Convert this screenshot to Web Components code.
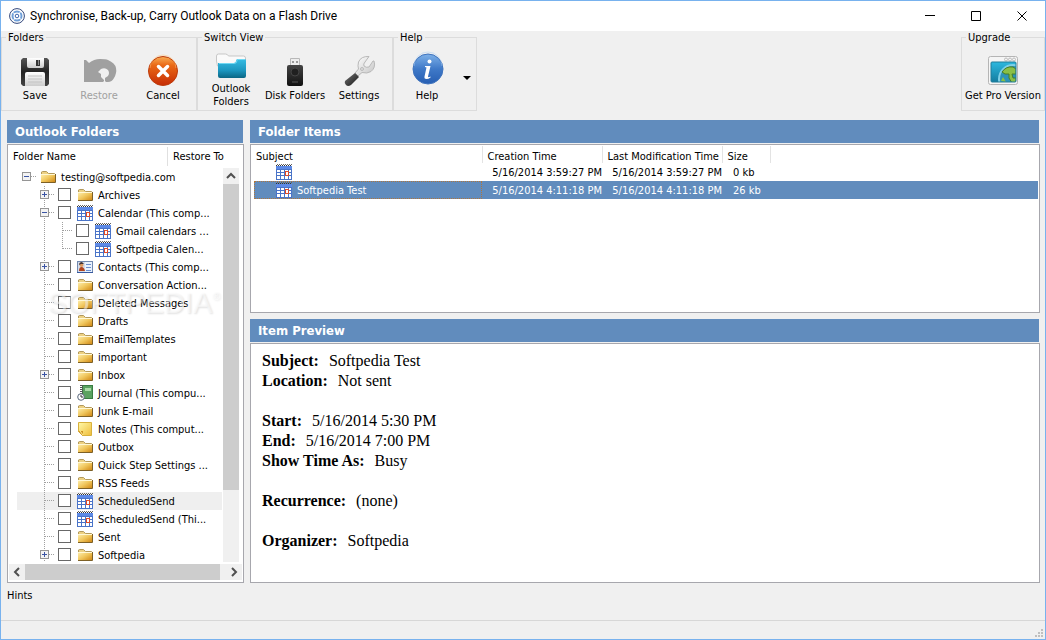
<!DOCTYPE html>
<html lang="en">
<head>
<meta charset="utf-8">
<title>Synchronise, Back-up, Carry Outlook Data on a Flash Drive</title>
<style>
  html, body { margin: 0; height: 100%; }
  body {
    --blue: #618cbd;
    --edge: #a7a7ad;
    --face: #f0f0f0;
    font: 11px/13px "DejaVu Sans Condensed", "Noto Sans", sans-serif;
    color: #000;
  }
</style>
</head>
<body>
<app-window>
  <title-bar slot="title">Synchronise, Back-up, Carry Outlook Data on a Flash Drive</title-bar>

  <tool-group slot="tools" label="Folders">
    <tool-button icon="save">Save</tool-button>
    <tool-button icon="restore" disabled>Restore</tool-button>
    <tool-button icon="cancel">Cancel</tool-button>
  </tool-group>
  <tool-group slot="tools" label="Switch View">
    <tool-button icon="outlook">Outlook<br>Folders</tool-button>
    <tool-button icon="usb">Disk Folders</tool-button>
    <tool-button icon="wrench">Settings</tool-button>
  </tool-group>
  <tool-group slot="tools" label="Help">
    <tool-button icon="info">Help</tool-button>
    <drop-arrow label="More help"></drop-arrow>
  </tool-group>
  <tool-group slot="tools" label="Upgrade" class="end">
    <tool-button icon="globe" wide>Get Pro Version</tool-button>
  </tool-group>

  <title-pane slot="side" heading="Outlook Folders"><folder-tree></folder-tree></title-pane>
  <title-pane slot="main" heading="Folder Items"><item-table></item-table></title-pane>
  <title-pane slot="main" heading="Item Preview"><item-preview></item-preview></title-pane>

  <span slot="hints">Hints</span>
</app-window>

<script>
const ICONS = {
  app: [16, `
    <circle cx="8" cy="8" r="7.400" fill="#fff" stroke="#32477c"/>
    <circle cx="8" cy="8" r="4.500" fill="#fff" stroke="#6f9fd8" stroke-width="2"/>
    <circle cx="8" cy="8" r="1.800" fill="#fff" stroke="#3d66ac"/>
    <path d="M3 4l3 2M13 12l-3-2M12 3l-2 3M4 13l2-3" stroke="#fff"/>`],
  save: [32, `
    <defs><linearGradient id="a" x2="0" y2="1"><stop stop-color="#555"/><stop offset=".5" stop-color="#222"/><stop offset="1" stop-color="#444"/></linearGradient>
    <linearGradient id="b" x2="0" y2="1"><stop stop-color="#fff"/><stop offset="1" stop-color="#ccc"/></linearGradient></defs>
    <path d="M4 2h24l2 2v24l-2 2H4l-2-2V4z" fill="url(#a)"/>
    <path d="M8 2h17v8q0 2-2 2H10q-2 0-2-2z" fill="url(#b)"/>
    <rect x="17" y="4" width="4" height="6" fill="#333"/><rect x="19" y="4" width="1" height="5" fill="#888"/>
    <path d="M6 30V18q0-2 2-2h16q2 0 2 2v12z" fill="url(#b)"/>
    <path d="M9 20h14M9 23h14M9 26h14" stroke="#c4c4c4"/>`],
  restore: [32, `
    <path d="M1 4h2l3 3q5-4 11-4 6 0 8 1 7 3 8 8 1 5-2 10-2 4-6 4h-2l-1-1v-3l3-2q2-3 0-6-3-3-7-1l-3 3 3 2v3l3 3v1l-1 1H1z" fill="#a0a0a0"/>`],
  cancel: [32, `
    <defs><linearGradient id="a" x2="0" y2="1"><stop stop-color="#f9ae55"/><stop offset=".3" stop-color="#ea6a17"/><stop offset="1" stop-color="#c62c05"/></linearGradient></defs>
    <circle cx="16" cy="15" r="14.500" fill="url(#a)" stroke="#bd3b0b"/>
    <path d="M3 12a13 13 0 0 1 26 0" fill="none" stroke="#ffc580" stroke-opacity=".5"/>
    <path d="M11.500 10.500l9 9M20.500 10.500l-9 9" stroke="#fff" stroke-width="3.500" stroke-linecap="round"/>`],
  outlook: [32, `
    <defs><linearGradient id="a" x2="0" y2="1"><stop stop-color="#37bde4"/><stop offset=".6" stop-color="#1c96bf"/><stop offset="1" stop-color="#0b6684"/></linearGradient></defs>
    <path d="M1.500 12V7q0-2 2-2h7q2 0 3 2h15q2 0 2 2v8h-28z" fill="#fafafa" stroke="#c7c7c7"/>
    <path d="M3 14h16q2 0 2-2 0-2 2-2h7q1 0 1 2v15q0 2-2 2H5q-2 0-2-2z" fill="url(#a)"/>
    <path d="M4 14.500h15q3 0 3-3 0-1 1-1h7" fill="none" stroke="#70d8f3"/>`],
  usb: [32, `
    <defs><linearGradient id="a" x2="0" y2="1"><stop stop-color="#444"/><stop offset="1" stop-color="#111"/></linearGradient></defs>
    <path d="M11.500 11V2.500h9V11z" fill="#ededed" stroke="#b8b8b8"/>
    <rect x="13" y="5" width="2" height="2" fill="#999"/><rect x="17" y="5" width="2" height="2" fill="#999"/>
    <rect x="8" y="9" width="16" height="21" rx="2" fill="url(#a)"/>
    <ellipse cx="16" cy="16" rx="4" ry="4" fill="#202020" stroke="#444"/>
    <path d="M13 26h6" fill="none" stroke="#555"/>`],
  wrench: [32, `
    <defs><linearGradient id="a" x2="1" y2="1"><stop stop-color="#fff"/><stop offset="1" stop-color="#c4c4c4"/></linearGradient>
    <linearGradient id="b" x2="1" y2="1"><stop stop-color="#777"/><stop offset=".5" stop-color="#444"/><stop offset="1" stop-color="#111"/></linearGradient></defs>
    <path d="M26 .5Q18 0 15.500 6q-1 4 0 7l-3.500 4 3 3 4-3.500q5 1.500 9-1 5-4 3-10.500h-1l-4 6q-3 1-5-1-1-2 1-4z" fill="url(#a)" stroke="#b8b8b8"/>
    <circle cx="19" cy="13" r="1.500" fill="#ddd" stroke="#bbb"/>
    <path d="M12 17l4 4-8 8q-3 2-5 0t-1-4z" fill="url(#b)"/>`],
  info: [32, `
    <defs><linearGradient id="a" x2="0" y2="1"><stop stop-color="#7eb1e8"/><stop offset=".5" stop-color="#3f79c8"/><stop offset="1" stop-color="#265eb2"/></linearGradient></defs>
    <g transform="translate(1 -3)"><circle cx="16" cy="16" r="15" fill="url(#a)" stroke="#3f73bd"/>
    <path d="M2 13a14 14 0 0 1 28 0" fill="none" stroke="#a9cdf3" stroke-opacity=".5"/>
    <circle cx="17.500" cy="8.500" r="2" fill="#fff"/>
    <path d="M13 13h5.500L16 23.500q0 1.500 2.500 0v1q-2 1.500-4 1.500-2.500 0-2-2.500l2-9q-.500-.500-1.500-.500z" fill="#fff"/></g>`],
  globe: [32, `
    <defs><linearGradient id="a" x2="0" y2="1"><stop stop-color="#2cb8df"/><stop offset="1" stop-color="#147c9f"/></linearGradient>
    <clipPath id="c"><rect x="4" y="6" width="25" height="20" rx="1"/></clipPath></defs>
    <rect x="1.500" y=".5" width="29" height="28" rx="2" fill="#f5f5f5" stroke="#b5b5b5"/>
    <g fill="none" stroke="#bbb"><circle cx="19" cy="3.500" r="1.500"/><circle cx="23" cy="3.500" r="1.500"/><circle cx="27" cy="3.500" r="1.500"/></g>
    <rect x="4" y="6" width="25" height="20" rx="1" fill="url(#a)"/>
    <g clip-path="url(#c)"><circle cx="26" cy="23" r="14" fill="#2d93b8" stroke="#7fcfe6" stroke-width="2"/>
    <path d="M15 16q4-6 11-5l3 2v5l-4 0 1 4 3 0v5h-4l-3-5 0-4-4 0z" fill="#8abf45" stroke="#477d2a"/>
    <path d="M14 25l2-4 3 5z" fill="#8abf45"/></g>
    <rect x="4" y="6" width="25" height="20" rx="1" fill="none" stroke="#217c99"/>`],
  folder: [16, `
    <defs><linearGradient id="a" x2="1" y2="1"><stop stop-color="#fff0b0"/><stop offset=".5" stop-color="#f0c65c"/><stop offset="1" stop-color="#cf8512"/></linearGradient></defs>
    <path d="M1.500 13V3l1-.5h4l2 2h6v9z" fill="#edd183" stroke="#b39a5c"/>
    <path d="M1 5h14v8.500H1z" fill="url(#a)"/>
    <path d="M15.500 5v8.500H1" fill="none" stroke="#7d6026"/>
    <path d="M1 5.500h14" stroke="#fff8d5"/>`],
  calendar: [16, `
    <rect y="2" width="16" height="14" fill="#4a74c8"/>
    <rect y="2" width="16" height="3" fill="#5d8ae6"/>
    <path d="M0 1.500h16" stroke="#333" stroke-dasharray="1 1"/><path d="M1 .5h15" stroke="#666" stroke-dasharray="1 1"/>
    <path d="M1 6h3v2H1zM5 6h3v2H5zM9 6h3v2H9zM13 6h2v2h-2zM1 9h3v2H1zM5 9h3v2H5zM9 9h3v2H9zM13 9h2v2h-2zM1 12h3v3H1zM5 12h3v3H5zM9 12h3v3H9zM13 12h2v3h-2z" fill="#fff"/>
    <rect x="9.500" y="7.500" width="3" height="4" fill="#fff" stroke="#e04c28"/>`],
  contact: [16, `
    <rect x=".5" y="2.500" width="15" height="11" fill="#e9f2fe" stroke="#7189b0"/>
    <path d="M0 13.500h16" stroke="#3659a0"/>
    <rect x="1" y="3" width="7" height="10" fill="#d5dce9"/>
    <path d="M2 12q0-4 2.500-4T8 12z" fill="#b2431c"/><circle cx="4.500" cy="6" r="2" fill="#dc9a61"/><path d="M2 6q0-3 3-3l2 2-3 0z" fill="#433"/>
    <path d="M9 5.500h5M9 8.500h5M9 11.500h5" stroke="#6d8fcd"/>`],
  journal: [16, `
    <rect x="5.500" y=".5" width="10" height="13" fill="#5aa260" stroke="#397d42"/>
    <rect x="8" y="3" width="6" height="3" fill="#a9dba6"/>
    <path d="M4.500 0v13" stroke="#555" stroke-width="3" stroke-dasharray="1 1"/>
    <circle cx="4" cy="12" r="3.300" fill="#fff" stroke="#59677b"/><path d="M4 10v2h2" fill="none" stroke="#333"/>`],
  note: [16, `
    <defs><linearGradient id="a" x2="1" y2="1"><stop stop-color="#fff9a8"/><stop offset="1" stop-color="#efbd3b"/></linearGradient></defs>
    <path d="M1.500 1.500h13v13h-9l-4-4z" fill="url(#a)" stroke="#d8b13c"/>
    <path d="M1 10l5 0 0 5z" fill="#cf9424"/><path d="M3 10l3 4" stroke="#fff2a0"/>`],
};

/** Inline SVG from the table above; `name` picks the drawing. */
class UiIcon extends HTMLElement {
  constructor() {
    super();
    this.attachShadow({ mode: 'open' });
  }

  connectedCallback() {
    const [size, art] = ICONS[this.getAttribute('name')];
    this.shadowRoot.innerHTML = `
      <style>:host { display: block; flex: none; } svg { display: block; overflow: visible; }</style>
      <svg width="${size}" height="${size}" viewBox="0 0 ${size} ${size}" aria-hidden="true">${art}</svg>`;
  }
}
customElements.define('ui-icon', UiIcon);

class AppWindow extends HTMLElement {
  constructor() {
    super();
    this.attachShadow({ mode: 'open' }).innerHTML = `
      <style>
        :host { display: flex; flex-direction: column; height: 100vh; box-sizing: border-box; border: 1px solid #78b2ee; background: var(--face); }
        .tools { display: flex; }
        ::slotted(.end) { margin-left: auto; }
        main { flex: 1; min-height: 0; display: grid; grid-template: minmax(0, 1fr) / 237px minmax(0, 1fr); gap: 6px; padding: 9px 5px 0 6px; }
        .side { display: grid; grid-template-rows: minmax(0, 1fr); }
        .main { display: grid; grid-template-rows: 193px minmax(0, 1fr); gap: 6px; }
        .hints { height: 31px; padding: 6px 6px 0; }
        footer { display: flex; justify-content: flex-end; align-items: flex-end; height: 18px; border-top: 1px solid #d7d7d7; }
        svg { display: block; margin: 2px; }
      </style>
      <slot name="title"></slot>
      <div class="tools"><slot name="tools"></slot></div>
      <main>
        <div class="side"><slot name="side"></slot></div>
        <div class="main"><slot name="main"></slot></div>
      </main>
      <div class="hints"><slot name="hints"></slot></div>
      <footer><svg width="8" height="8" fill="#bfbfbf"><path d="M6 0h2v2H6zM3 3h2v2H3zM6 3h2v2H6zM0 6h2v2H0zM3 6h2v2H3zM6 6h2v2H6z"/></svg></footer>`;
  }
}
customElements.define('app-window', AppWindow);

class TitleBar extends HTMLElement {
  constructor() {
    super();
    this.attachShadow({ mode: 'open' }).innerHTML = `
      <style>
        :host { display: flex; align-items: center; height: 30px; padding-left: 8px; background: #fff; font: 12px/16px Roboto, "Noto Sans", sans-serif; }
        .text { flex: 1; margin-left: 5px; white-space: nowrap; overflow: hidden; }
        button { width: 46px; height: 30px; padding: 0; border: 0; background: none; display: grid; place-items: center; }
        button:hover { background: #e5e5e5; }
        svg { fill: none; stroke: #000; display: block; }
      </style>
      <ui-icon name="app"></ui-icon>
      <span class="text"><slot></slot></span>
      <button aria-label="Minimise"><svg width="11" height="11"><path d="M0 4.500h10"/></svg></button>
      <button aria-label="Maximise"><svg width="11" height="11"><path d="M.5 .5h9v9h-9z"/></svg></button>
      <button aria-label="Close"><svg width="11" height="11"><path d="M.5 .5l9 9M9.500 .5l-9 9"/></svg></button>`;
  }
}
customElements.define('title-bar', TitleBar);

class ToolGroup extends HTMLElement {
  constructor() {
    super();
    this.attachShadow({ mode: 'open' }).innerHTML = `
      <style>
        :host { display: block; }
        fieldset { margin: 0; padding: 0 1px; border: 1px solid #dcdcdc; height: 80px; box-sizing: border-box; min-width: 0; }
        legend { margin-left: 3px; padding: 0 2px; }
        .row { display: flex; height: 65px; }
      </style>
      <fieldset><legend></legend><div class="row"><slot></slot></div></fieldset>`;
  }

  connectedCallback() {
    this.shadowRoot.querySelector('legend').textContent = this.getAttribute('label');
  }
}
customElements.define('tool-group', ToolGroup);

class ToolButton extends HTMLElement {
  constructor() {
    super();
    this.attachShadow({ mode: 'open' });
  }

  connectedCallback() {
    this.shadowRoot.innerHTML = `
      <style>
        :host { display: block; width: 64px; }
        :host([wide]) { width: 80px; }
        button { display: flex; flex-direction: column; align-items: center; justify-content: center; gap: 1px; width: 100%; height: 100%; padding: 4px 0 0; border: 0; background: none; font: inherit; color: inherit; white-space: nowrap; }
        button:disabled { color: #a0a0a0; }
      </style>
      <button ${this.hasAttribute('disabled') ? 'disabled' : ''}>
        <ui-icon name="${this.getAttribute('icon')}"></ui-icon>
        <span><slot></slot></span>
      </button>`;
  }
}
customElements.define('tool-button', ToolButton);

class DropArrow extends HTMLElement {
  constructor() {
    super();
    this.attachShadow({ mode: 'open' }).innerHTML = `
      <style>
        :host { display: block; width: 16px; }
        button { display: grid; place-items: center; width: 100%; height: 100%; padding: 2px 0 0; border: 0; background: none; }
      </style>
      <button aria-label="${this.getAttribute('label')}"><svg width="8" height="4"><path d="M0 0h8L4 4z"/></svg></button>`;
  }
}
customElements.define('drop-arrow', DropArrow);

class TitlePane extends HTMLElement {
  constructor() {
    super();
    this.attachShadow({ mode: 'open' }).innerHTML = `
      <style>
        :host { display: flex; flex-direction: column; min-width: 0; min-height: 0; }
        h2 { margin: 0 1px 1px 0; padding: 0 8px; background: var(--blue); color: #fff; font: bold 13px/23px "DejaVu Sans Condensed", "Noto Sans", sans-serif; }
        .box { flex: 1; min-height: 0; border: 1px solid var(--edge); background: #fff; }
      </style>
      <h2></h2>
      <div class="box"><slot></slot></div>`;
  }

  connectedCallback() {
    this.shadowRoot.querySelector('h2').textContent = this.getAttribute('heading');
  }
}
customElements.define('title-pane', TitlePane);

// depth, icon, label, expander ('+', '-' or none), row state
const FOLDERS = [
  [0, 'folder', 'testing@softpedia.com', '-'],
  [1, 'folder', 'Archives', '+'],
  [1, 'calendar', 'Calendar (This comp...', '-'],
  [2, 'calendar', 'Gmail calendars ...'],
  [2, 'calendar', 'Softpedia Calen...', '', 'last'],
  [1, 'contact', 'Contacts (This comp...', '+'],
  [1, 'folder', 'Conversation Action...'],
  [1, 'folder', 'Deleted Messages'],
  [1, 'folder', 'Drafts'],
  [1, 'folder', 'EmailTemplates'],
  [1, 'folder', 'important'],
  [1, 'folder', 'Inbox', '+'],
  [1, 'journal', 'Journal (This compu...'],
  [1, 'folder', 'Junk E-mail'],
  [1, 'note', 'Notes (This comput...'],
  [1, 'folder', 'Outbox'],
  [1, 'folder', 'Quick Step Settings ...'],
  [1, 'folder', 'RSS Feeds'],
  [1, 'calendar', 'ScheduledSend', '', 'selected'],
  [1, 'calendar', 'ScheduledSend (Thi...'],
  [1, 'folder', 'Sent'],
  [1, 'folder', 'Softpedia', '+'],
];

class FolderTree extends HTMLElement {
  constructor() {
    super();
    this.attachShadow({ mode: 'open' }).innerHTML = `
      <style>
        :host { display: flex; flex-direction: column; height: 100%; position: relative; }
        .head { display: flex; flex: none; height: 19px; margin: 2px 0; line-height: 19px; }
        .head span { padding-left: 5px; }
        .head span:first-child { width: 154px; border-right: 1px solid #e0e0e0; }
        .view { display: flex; flex: 1; min-height: 0; margin-bottom: 2px; }
        ul { flex: 1; min-width: 0; margin: 0; padding: 0 1px 0 9px; list-style: none; overflow: hidden; }
        li { display: flex; align-items: center; height: 18px; padding-left: 1px; white-space: nowrap; }
        li.selected { background: #efefef; }
        .guide { display: block; flex: none; width: 18px; height: 18px; padding: 0; border: 0; background: none; }
        .guide svg { display: block; shape-rendering: crispEdges; }
        input { appearance: none; flex: none; width: 13px; height: 13px; margin: 0 6px 1px 4px; border: 1px solid #686868; background: #fff; }
        ui-icon { margin-right: 5px; }
        li.root ui-icon { margin-left: 4px; }
        .bar { display: flex; flex: none; background: var(--face); }
        .bar button { flex: none; width: 16px; height: 16px; padding: 0; border: 0; background: none; display: grid; place-items: center; }
        .bar svg { fill: none; stroke: #505050; stroke-width: 2; }
        .bar .thumb { background: #cdcdcd; }
        .v { flex-direction: column; width: 16px; margin-right: 4px; }
        .v .track { flex: 1; }
        .v .thumb { height: 81%; }
        .h { margin: 0 1px 2px; }
        .h .track { flex: 1; display: grid; }
        .h .thumb { width: 97%; }
        .mark { position: absolute; left: 40px; top: 141px; color: rgba(255,255,255,.5); font: 29px/34px "Liberation Sans", sans-serif; text-shadow: 1px 1px 2px rgba(0,0,0,.12); pointer-events: none; }
        .mark sup { font-size: 11px; line-height: 0; vertical-align: 13px; }
      </style>
      <div class="head"><span>Folder Name</span><span>Restore To</span></div>
      <div class="view">
        <ul>${FOLDERS.map((f, i) => this.#row(f, i)).join('')}</ul>
        <div class="bar v">
          <button aria-label="Scroll up"><svg width="10" height="8"><path d="M1 6l4-4 4 4"/></svg></button>
          <div class="track"><div class="thumb"></div></div>
        </div>
      </div>
      <div class="bar h">
        <button aria-label="Scroll left"><svg width="8" height="10"><path d="M6 1L2 5l4 4"/></svg></button>
        <div class="track"><div class="thumb"></div></div>
        <button aria-label="Scroll right"><svg width="8" height="10"><path d="M2 1l4 4-4 4"/></svg></button>
      </div>
      <div class="mark">SOFTPEDIA<sup>®</sup></div>`;
  }

  #row([depth, icon, label, sign, state], i) {
    const box = depth
      ? `<input type="checkbox" id="f${i}"><ui-icon name="${icon}"></ui-icon><label for="f${i}">${label}</label>`
      : `<ui-icon name="${icon}"></ui-icon><span>${label}</span>`;
    let guides = '';
    if (depth > 0) guides += this.#guide('');
    if (depth > 1) guides += this.#guide('M8.500 0v18');
    // the root has no line above it, the last child none below
    const down = depth === 0 ? '' : state === 'last' ? 'M8.500 0v9' : 'M8.500 0v18';
    guides += this.#guide(down + 'M9 8.500h9', sign);
    return `<li class="${depth ? '' : 'root'} ${state || ''}">${guides}${box}</li>`;
  }

  #guide(path, sign) {
    const svg = `<svg width="18" height="18"><path d="${path}" fill="none" stroke="#a0a0a0" stroke-dasharray="1 1"/>${sign ? `
      <rect x="4.500" y="4.500" width="8" height="8" rx="1" fill="#f3f3f3" stroke="#959595"/>
      <path d="M6 8.500h5${sign === '+' ? 'M8.500 6v5' : ''}" stroke="#3b55a4"/>` : ''}</svg>`;
    return sign
      ? `<button class="guide" aria-label="${sign === '+' ? 'Expand' : 'Collapse'}">${svg}</button>`
      : `<span class="guide">${svg}</span>`;
  }
}
customElements.define('folder-tree', FolderTree);

class ItemTable extends HTMLElement {
  constructor() {
    super();
    this.attachShadow({ mode: 'open' }).innerHTML = `
      <style>
        :host { display: block; padding: 1px 1px 0 3px; }
        table { width: 100%; table-layout: fixed; border-collapse: collapse; }
        th { height: 17px; padding: 4px 0 0 5px; border-right: 1px solid #e3e3e3; font-weight: normal; text-align: left; }
        th:first-child { padding-left: 2px; }
        th:last-child { border: 0; }
        th, td { white-space: nowrap; box-sizing: border-box; }
        td { height: 18px; padding: 0; text-align: right; }
        td:first-child { padding-left: 22px; text-align: left; }
        td:nth-child(4) { padding-left: 11px; text-align: left; }
        .subject { display: flex; align-items: center; gap: 5px; }
        tr.selected { background: var(--blue); color: #fff; }
        tr.selected td:first-child { outline: 1px dotted #b0763c; outline-offset: -1px; }
      </style>
      <table>
        <colgroup><col width="228"><col width="120"><col width="120"><col width="48"><col></colgroup>
        <thead><tr><th>Subject</th><th>Creation Time</th><th>Last Modification Time</th><th>Size</th><th></th></tr></thead>
        <tbody>
          <tr><td><div class="subject"><ui-icon name="calendar"></ui-icon></div></td><td>5/16/2014 3:59:27 PM</td><td>5/16/2014 3:59:27 PM</td><td>0 kb</td><td></td></tr>
          <tr class="selected"><td><div class="subject"><ui-icon name="calendar"></ui-icon>Softpedia Test</div></td><td>5/16/2014 4:11:18 PM</td><td>5/16/2014 4:11:18 PM</td><td>26 kb</td><td></td></tr>
        </tbody>
      </table>`;
  }
}
customElements.define('item-table', ItemTable);

class ItemPreview extends HTMLElement {
  constructor() {
    super();
    this.attachShadow({ mode: 'open' }).innerHTML = `
      <style>
        :host { display: block; padding: 7px 11px; font: 16px/20px "Liberation Serif", serif; }
        dl { margin: 0 0 20px; }
        div { display: flex; gap: 10px; }
        dt { font-weight: bold; }
        dd { margin: 0; }
      </style>
      <dl>
        <div><dt>Subject:</dt><dd>Softpedia Test</dd></div>
        <div><dt>Location:</dt><dd>Not sent</dd></div>
      </dl>
      <dl>
        <div><dt>Start:</dt><dd>5/16/2014 5:30 PM</dd></div>
        <div><dt>End:</dt><dd>5/16/2014 7:00 PM</dd></div>
        <div><dt>Show Time As:</dt><dd>Busy</dd></div>
      </dl>
      <dl><div><dt>Recurrence:</dt><dd>(none)</dd></div></dl>
      <dl><div><dt>Organizer:</dt><dd>Softpedia</dd></div></dl>`;
  }
}
customElements.define('item-preview', ItemPreview);
</script>
</body>
</html>
